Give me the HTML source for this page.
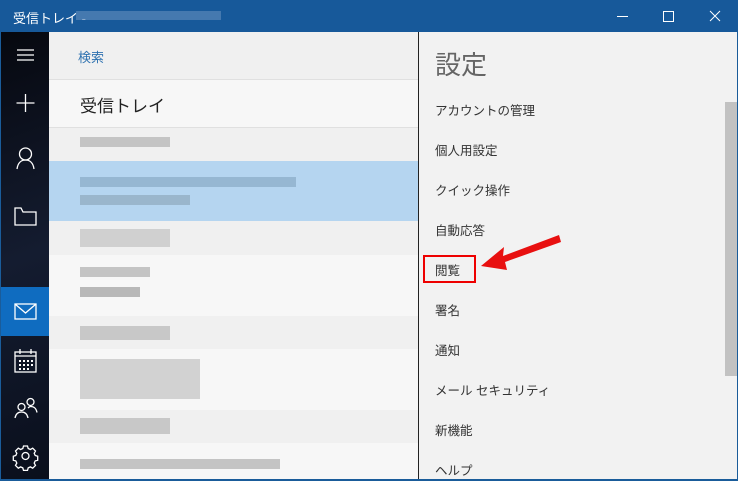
<!DOCTYPE html><html><head><meta charset="utf-8"><style>
*{margin:0;padding:0;box-sizing:border-box}
body{width:738px;height:481px;overflow:hidden;position:relative;background:#1a5c9a;font-family:"Liberation Sans","Noto Sans CJK JP",sans-serif}
.a{position:absolute}
.tb{left:0;top:0;width:738px;height:32px;background:#17599a;color:#fff;font-size:13px}
.nav{left:1px;top:32px;width:48px;height:447px;background:linear-gradient(160deg,#06080f,#141c30 50%,#0a0f1c)}
.mid{left:49px;top:32px;width:369px;height:447px;background:#f7f7f7}
.set{left:418px;top:32px;width:319px;height:447px;background:#f2f2f2;border-left:1px solid #222}
.si{position:absolute;left:16px;font-size:12.5px;color:#333}
.r{position:absolute;left:0;width:369px}
.b{position:absolute;height:10px}
</style></head><body>
<div class="a tb"><span class="a" style="left:13px;top:8px">受信トレイ -</span>
<div class="a" style="left:76px;top:11px;width:145px;height:9px;background:#5a88b8;opacity:.7"></div>
<svg class="a" style="left:600px;top:0" width="138" height="32"><g stroke="#fff" stroke-width="1" fill="none"><path d="M17 16.5h11"/><rect x="63.5" y="11.5" width="10" height="10"/><path d="M110 11l10 10M120 11l-10 10"/></g></svg></div>
<div class="a nav">
<svg width="48" height="447" style="position:absolute;left:0;top:0"><g stroke="#fff" stroke-width="1.3" fill="none">
<path d="M16 18h17M16 23h17M16 28h17"/>
<path d="M24.5 62v18M15.5 71h18"/>
<circle cx="24.5" cy="122" r="6"/><path d="M16 137c1-7 5-9 8.5-9s7.5 2 8.5 9"/>
<path d="M14 176v17h21v-13H22l-2-4z"/>
</g>
<rect x="0" y="255" width="48" height="49" fill="#0f6cc0"/>
<g stroke="#fff" stroke-width="1.3" fill="none"><rect x="14" y="272" width="21" height="15"/><path d="M14 272l10.5 9 10.5-9"/>
<rect x="14" y="320" width="21" height="20"/><path d="M14 324h21M19 317v5M30 317v5"/>
<circle cx="20.5" cy="375" r="3.5"/><path d="M14 386c1-5 4-6 6.5-6s5.5 1 6.5 6"/><circle cx="29.5" cy="370" r="3.5"/><path d="M27 376c1-1 2-1.5 2.5-1.5 3 0 5.5 1 6.5 6"/>
<circle cx="24.5" cy="424" r="3.5"/>
<path d="M22.5 414h4l.7 2.5 2.2 1 2.3-1.3 2.8 2.8-1.3 2.3 1 2.2 2.5.7v4l-2.5.7-1 2.2 1.3 2.3-2.8 2.8-2.3-1.3-2.2 1-.7 2.5h-4l-.7-2.5-2.2-1-2.3 1.3-2.8-2.8 1.3-2.3-1-2.2-2.5-.7v-4l2.5-.7 1-2.2-1.3-2.3 2.8-2.8 2.3 1.3 2.2-1z"/></g>
<g fill="#fff"><rect x="18" y="328" width="2" height="2"/><rect x="22" y="328" width="2" height="2"/><rect x="26" y="328" width="2" height="2"/><rect x="30" y="328" width="2" height="2"/><rect x="18" y="332" width="2" height="2"/><rect x="22" y="332" width="2" height="2"/><rect x="26" y="332" width="2" height="2"/><rect x="30" y="332" width="2" height="2"/><rect x="18" y="336" width="2" height="2"/><rect x="22" y="336" width="2" height="2"/><rect x="26" y="336" width="2" height="2"/></g>
</svg></div>
<div class="a mid">
<div class="r" style="top:0;height:48px;background:#f0f0f0;border-bottom:1px solid #e0e0e0"><span class="a" style="left:29px;top:15px;font-size:13px;color:#2f72b0">検索</span></div>
<div class="r" style="top:48px;height:48px;background:#f7f7f7;border-bottom:1px solid #e0e0e0"><span class="a" style="left:31px;top:12px;font-size:17px;color:#222">受信トレイ</span></div>
<div class="r" style="top:96px;height:33px;background:#f0f0f0"><div class="b" style="left:31px;top:9px;width:90px;background:#c4c4c4"></div></div>
<div class="r" style="top:129px;height:60px;background:#b5d5f0"><div class="b" style="left:31px;top:16px;width:216px;background:#96b7d2"></div><div class="b" style="left:31px;top:34px;width:110px;background:#9ab6cc"></div></div>
<div class="r" style="top:189px;height:34px;background:#f0f0f0"><div class="b" style="left:31px;top:8px;width:90px;height:18px;background:#d0d0d0"></div></div>
<div class="r" style="top:223px;height:61px;background:#f7f7f7"><div class="b" style="left:31px;top:12px;width:70px;background:#c4c4c4"></div><div class="b" style="left:31px;top:32px;width:60px;background:#b8b8b8"></div></div>
<div class="r" style="top:284px;height:33px;background:#f0f0f0"><div class="b" style="left:31px;top:10px;width:90px;height:14px;background:#c8c8c8"></div></div>
<div class="r" style="top:317px;height:61px;background:#f7f7f7"><div class="b" style="left:31px;top:10px;width:120px;height:40px;background:#d2d2d2"></div></div>
<div class="r" style="top:378px;height:33px;background:#f0f0f0"><div class="b" style="left:31px;top:8px;width:90px;height:16px;background:#c8c8c8"></div></div>
<div class="r" style="top:411px;height:36px;background:#f7f7f7"><div class="b" style="left:31px;top:16px;width:200px;background:#c4c4c4"></div></div>
</div>
<div class="a set">
<span class="a" style="left:16px;top:13px;font-size:26px;color:#666">設定</span>
<span class="si" style="top:68px">アカウントの管理</span>
<span class="si" style="top:108px">個人用設定</span>
<span class="si" style="top:148px">クイック操作</span>
<span class="si" style="top:188px">自動応答</span>
<span class="si" style="top:228px">閲覧</span>
<div class="a" style="left:4px;top:223px;width:53px;height:28px;border:2px solid #e00"></div>
<span class="si" style="top:268px">署名</span>
<span class="si" style="top:308px">通知</span>
<span class="si" style="top:348px">メール セキュリティ</span>
<span class="si" style="top:388px">新機能</span>
<span class="si" style="top:428px">ヘルプ</span>
<div class="a" style="left:306px;top:70px;width:12px;height:274px;background:#c2c2c2"></div>
<svg class="a" style="left:0;top:0" width="319" height="447"><path d="M140 203L84 224l1-9-23 19 26 4-2-8 56-20z" fill="#e81010"/></svg>
</div>
</body></html>
